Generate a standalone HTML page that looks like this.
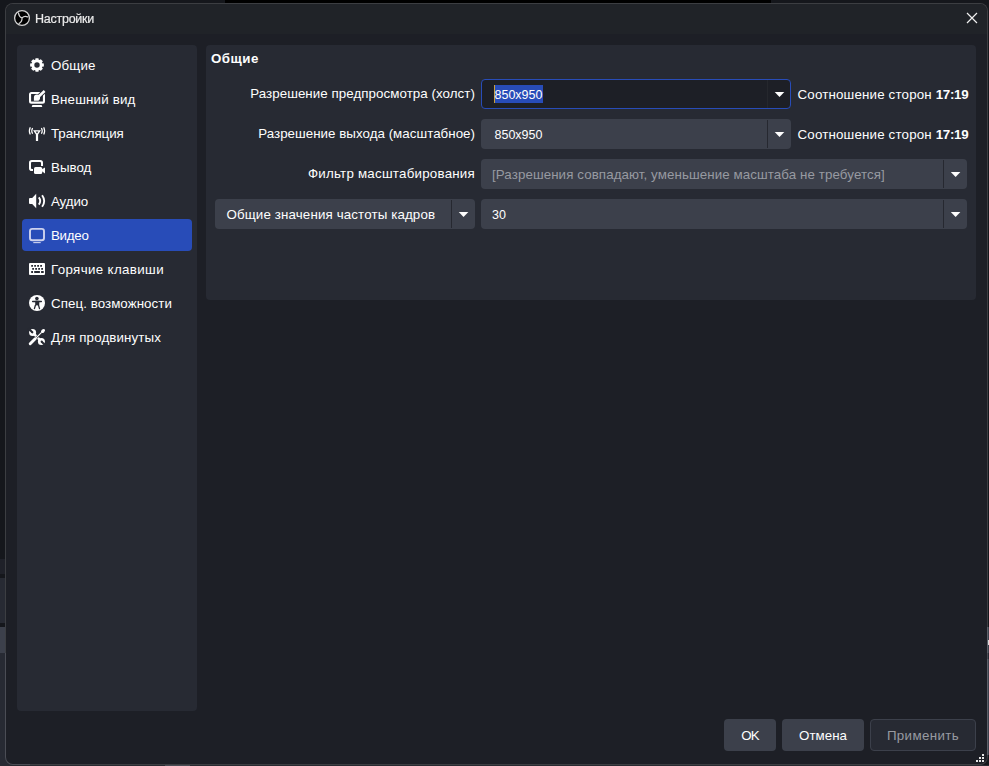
<!DOCTYPE html>
<html><head><meta charset="utf-8">
<style>
*{box-sizing:border-box;margin:0;padding:0}
html,body{width:989px;height:766px;overflow:hidden;background:#15171c}
body{position:relative;font-family:"Liberation Sans",sans-serif;font-size:13.33px;color:#fefefe}
.a{position:absolute}
.t{position:absolute;white-space:nowrap;line-height:16px}
#win{left:5px;top:3px;width:983px;height:762px;border:1px solid rgba(255,255,255,0.17);border-radius:8px;background:#1d1f26;background-clip:padding-box;overflow:hidden}
#tbar{left:0;top:0;width:981px;height:30px;background:#202328}
.panel{background:#272a33;border-radius:4px}
.combo{background:#3c404b;border-radius:4px}
.sep{position:absolute;top:1px;bottom:1px;width:1px;background:#262830}
.arr{position:absolute;width:0;height:0;border-left:4.8px solid transparent;border-right:4.8px solid transparent;border-top:5.6px solid #fefefe}
.btn{position:absolute;background:#3c404b;border-radius:4px;height:32px;text-align:center;line-height:34px}
svg{position:absolute;overflow:visible;z-index:5}
</style></head><body>
<div class="a" style="left:225px;top:0;width:546px;height:3px;background:#000"></div>
<!-- left strip of main window behind -->
<div class="a" style="left:0;top:559px;width:5px;height:15px;background:#1f2129"></div>
<div class="a" style="left:0;top:578px;width:5px;height:45px;background:#272a33"></div>
<div class="a" style="left:0;top:627px;width:5px;height:26px;background:#3c404b"></div>
<div class="a" style="left:0;top:653px;width:30px;height:113px;background:#272a33"></div>
<div class="a" style="left:0;top:765px;width:989px;height:1px;background:#292b32"></div>
<div class="a" style="left:165px;top:765px;width:25px;height:1px;background:#4a4d56"></div>
<div class="a" style="left:986px;top:627px;width:3px;height:26px;background:#3c404b"></div>
<div class="a" style="left:986px;top:653px;width:3px;height:6px;background:#272a33"></div>
<div class="a" style="left:986px;top:659px;width:3px;height:96px;background:#3c404b"></div>
<div class="a" style="left:988px;top:640px;width:1px;height:5px;background:#d8d8d8"></div>

<div id="win" class="a">
  <div id="tbar" class="a"></div>
</div>

<!-- OBS logo -->
<svg style="left:0;top:0" width="989" height="766">
  <circle cx="22" cy="18" r="7.4" fill="#000" stroke="#d2d2d2" stroke-width="1.3"/>
  <path d="M18.5 13 Q18.9 16.9 22 18 M22 18 Q24.3 15.5 27.6 16.9 M22 18 Q22.3 21.6 19.2 23.4" stroke="#d2d2d2" stroke-width="1.25" fill="none" stroke-linecap="round"/>
  <path d="M967 13 L977 23 M977 13 L967 23" stroke="#f0f0f0" stroke-width="1.2"/>
  <g fill="#fefefe" stroke="none">
   <!-- gear -->
   <g transform="translate(29,57)"><path fill-rule="evenodd" d="M6.15 2.93 L6.54 1.15 L9.46 1.15 L9.85 2.93 L10.28 3.11 L11.81 2.13 L13.87 4.19 L12.89 5.72 L13.07 6.15 L14.85 6.54 L14.85 9.46 L13.07 9.85 L12.89 10.28 L13.87 11.81 L11.81 13.87 L10.28 12.89 L9.85 13.07 L9.46 14.85 L6.54 14.85 L6.15 13.07 L5.72 12.89 L4.19 13.87 L2.13 11.81 L3.11 10.28 L2.93 9.85 L1.15 9.46 L1.15 6.54 L2.93 6.15 L3.11 5.72 L2.13 4.19 L4.19 2.13 L5.72 3.11Z M10.7 8 A2.7 2.7 0 1 0 5.3 8 A2.7 2.7 0 1 0 10.7 8Z"/></g>
   <!-- appearance: monitor with brush -->
   <g transform="translate(29,91)">
     <path fill-rule="evenodd" d="M2.5 0.9 H13.5 Q16 0.9 16 3.4 V10.3 Q16 12.8 13.5 12.8 H2.5 Q0 12.8 0 10.3 V3.4 Q0 0.9 2.5 0.9Z M2.1 3 V10.6 H13.9 V3Z"/>
     <path d="M3.4 14 H12.6 L13.3 16.1 H2.7Z"/>
     <path d="M8.6 6.6 L16.8 -1.2" stroke="#272a33" stroke-width="4.4"/>
     <path d="M9.2 6 L15.6 0" stroke="#fefefe" stroke-width="2.5"/>
     <path d="M4.9 9.8 V6.7 A3.1 3.1 0 1 1 8 9.8Z"/>
   </g>
   <!-- stream: antenna -->
   <g transform="translate(29,125)">
     <path fill-rule="evenodd" d="M4.1 5.2 H11.9 L9.1 9.6 V16 H6.9 V9.6Z M6.5 6.5 L8 8.5 L9.5 6.5Z"/>
     <g fill="none" stroke="#fefefe" stroke-width="1.2">
       <path d="M3.6 3 Q1.9 5.9 3.6 8.8"/><path d="M1.3 2.2 Q-0.6 5.9 1.3 9.6"/>
       <path d="M12.4 3 Q14.1 5.9 12.4 8.8"/><path d="M14.7 2.2 Q16.6 5.9 14.7 9.6"/>
     </g>
   </g>
   <!-- output -->
   <g transform="translate(29,159)">
     <path d="M2.8 1 H11.2 Q14 1 14 3.8 V7 H12 V4 Q12 3 11 3 H3 Q2 3 2 4 V9.2 Q2 10 3 10 H4 V12 H2.8 Q0 12 0 9.2 V3.8 Q0 1 2.8 1Z"/>
     <rect x="5" y="8" width="8.2" height="7" rx="1.6"/>
     <path d="M12.6 10.6 L16 8.6 V14.4 L12.6 12.1Z"/>
   </g>
   <!-- audio -->
   <g transform="translate(29,193)">
     <path d="M1 5 H3.2 L7.2 0.7 V15.2 L3.2 11 H1 Q0 11 0 10 V6 Q0 5 1 5Z"/>
     <g fill="none" stroke="#fefefe" stroke-width="1.9">
       <path d="M9.8 4.4 Q12.6 8 9.8 11.6"/>
       <path d="M13.1 2.2 Q17.3 8 13.1 13.8"/>
     </g>
   </g>
   <!-- video monitor (selected) -->
   <g transform="translate(29,227)" fill="none" stroke="#cdd2ee">
     <rect x="1" y="1.9" width="14" height="11.3" rx="2.3" stroke-width="1.9"/>
     <path d="M4.3 15.6 H11.7" stroke-width="1.1"/>
   </g>
   <!-- keyboard -->
   <g transform="translate(29,261)">
     <path fill-rule="evenodd" d="M1 2 H15 Q16 2 16 3 V13 Q16 14 15 14 H1 Q0 14 0 13 V3 Q0 2 1 2Z
       M2.2 4 h1.8 v1.8 h-1.8Z M5.2 4 h1.8 v1.8 h-1.8Z M8.2 4 h1.8 v1.8 h-1.8Z M11.2 4 h1.8 v1.8 h-1.8Z
       M3.2 7 h1.8 v1.8 h-1.8Z M6.2 7 h1.8 v1.8 h-1.8Z M9.2 7 h1.8 v1.8 h-1.8Z M12.2 7 h1.8 v1.8 h-1.8Z
       M2.2 10.1 h1.8 v1.8 h-1.8Z M5.2 10.1 h5.7 v1.8 h-5.7Z M12.1 10.1 h2.6 v1.8 h-2.6Z"/>
   </g>
   <!-- accessibility -->
   <g transform="translate(29,295)">
     <circle cx="8" cy="8" r="8"/>
     <g fill="#272a33" stroke="#272a33">
       <circle cx="7.9" cy="3.6" r="1.8" stroke="none"/>
       <path d="M3.6 6.5 H12.4" stroke-width="1.3" stroke-linecap="round"/>
       <path d="M6.3 6.3 H9.7 L9.6 10.3 L10.5 13.6 M6.4 10.3 L5.4 13.6" stroke-width="1.3" stroke-linecap="round" fill="none"/>
       <rect x="6.2" y="6.2" width="3.5" height="4.2" stroke="none"/>
     </g>
   </g>
   <!-- tools -->
   <g transform="translate(29,329)">
     <path d="M4.2 4.2 L11.8 11.8" stroke="#fefefe" stroke-width="2.6"/>
     <circle cx="3.6" cy="3.6" r="3.5"/>
     <circle cx="12.4" cy="12.4" r="3.5"/>
     <path d="M3.3 3.3 L-0.8 -0.8 M12.7 12.7 L16.8 16.8" stroke="#272a33" stroke-width="2"/>
     <circle cx="3.3" cy="3.3" r="1.1" fill="#272a33"/>
     <circle cx="12.7" cy="12.7" r="1.1" fill="#272a33"/>
     <path d="M1.2 14.8 L13.2 2.8" stroke="#272a33" stroke-width="2.4"/>
     <path d="M1.2 14.8 L6.2 9.8" stroke="#fefefe" stroke-width="2.9" stroke-linecap="round"/>
     <path d="M6 10 L12.6 3.4" stroke="#fefefe" stroke-width="1.1"/>
     <ellipse cx="14" cy="2" rx="2.3" ry="1.6" transform="rotate(-45 14 2)"/>
   </g>
  </g>
</svg>
<div id="title" class="t" style="letter-spacing:-0.25px;will-change:transform;-webkit-text-stroke:0.2px #e8e8e8;left:34.6px;top:10.5px;font-size:12.5px;color:#ececec">Настройки</div>

<!-- sidebar -->
<div class="a panel" style="left:17px;top:45px;width:180px;height:666px"></div>
<div class="a" style="left:22px;top:219px;width:170px;height:32px;background:#284cb8;border-radius:4px"></div>

<div id="s0" class="t" style="letter-spacing:0.15px;left:51px;top:58px">Общие</div>
<div id="s1" class="t" style="letter-spacing:0.17px;left:51px;top:92px">Внешний вид</div>
<div id="s2" class="t" style="letter-spacing:-0.09px;left:51px;top:126px">Трансляция</div>
<div id="s3" class="t" style="letter-spacing:0px;left:51px;top:160px">Вывод</div>
<div id="s4" class="t" style="letter-spacing:-0.12px;left:51px;top:194px">Аудио</div>
<div id="s5" class="t" style="letter-spacing:-0.27px;left:51px;top:228px">Видео</div>
<div id="s6" class="t" style="letter-spacing:0.36px;left:51px;top:262px">Горячие клавиши</div>
<div id="s7" class="t" style="letter-spacing:0.06px;left:51px;top:296px">Спец. возможности</div>
<div id="s8" class="t" style="letter-spacing:0.13px;left:51px;top:330px">Для продвинутых</div>

<!-- content panel -->
<div class="a panel" style="left:206px;top:45px;width:770px;height:255px"></div>
<div id="hdr" class="t" style="letter-spacing:0.5px;left:211px;top:51px;font-weight:bold">Общие</div>

<!-- row1 -->
<div id="l1" class="t" style="letter-spacing:0.06px;right:514px;top:85.5px">Разрешение предпросмотра (холст)</div>
<div class="a" style="left:481px;top:79px;width:310px;height:30px;background:#1d1f26;border:1px solid #284cb8;border-radius:4px"></div>
<div class="a" style="left:494px;top:85px;width:49px;height:18px;background:#284cb8"></div>
<div class="a" style="left:494px;top:85px;width:1px;height:18px;background:#c8a040"></div>
<div id="v1" class="t" style="letter-spacing:0px;font-size:12.5px;left:494.5px;top:87px">850x950</div>
<div class="a" style="left:767px;top:80px;width:1px;height:28px;background:#25272d"></div>
<div id="a1" class="t" style="letter-spacing:0.17px;left:797.5px;top:87px">Соотношение сторон <b style="letter-spacing:-0.3px">17:19</b></div>

<!-- row2 -->
<div id="l2" class="t" style="letter-spacing:0.03px;right:514px;top:126px">Разрешение выхода (масштабное)</div>
<div class="a combo" style="left:481px;top:119px;width:310px;height:30px"><div class="sep" style="left:286px"></div></div>
<div id="v2" class="t" style="letter-spacing:0px;font-size:12.5px;left:494.5px;top:127px">850x950</div>
<div id="a2" class="t" style="letter-spacing:0.17px;left:797.5px;top:127px">Соотношение сторон <b style="letter-spacing:-0.3px">17:19</b></div>

<!-- row3 -->
<div id="l3" class="t" style="letter-spacing:0.23px;right:514px;top:166px">Фильтр масштабирования</div>
<div class="a combo" style="left:481px;top:159px;width:486px;height:30px"><div class="sep" style="left:462px"></div></div>
<div id="ph3" class="t" style="letter-spacing:0.09px;left:492px;top:167px;color:#979aa1">[Разрешения совпадают, уменьшение масштаба не требуется]</div>

<!-- row4 -->
<div class="a combo" style="left:215px;top:199px;width:260px;height:30px"><div class="sep" style="left:236px"></div></div>
<div id="fr4" class="t" style="letter-spacing:0.13px;left:226.5px;top:207px">Общие значения частоты кадров</div>
<div class="a combo" style="left:481px;top:199px;width:486px;height:30px"><div class="sep" style="left:462px"></div></div>
<div id="v30" class="t" style="letter-spacing:0px;font-size:12.5px;left:492px;top:207px">30</div>

<svg style="left:0;top:0" width="989" height="766"><g fill="#fefefe"><path d="M774.7 92 H784.3000000000001 L779.5 97.1Z"/><path d="M774.7 132 H784.3000000000001 L779.5 137.1Z"/><path d="M950.8 172 H960.4 L955.5999999999999 177.1Z"/><path d="M458.75 212 H468.35 L463.55 217.1Z"/><path d="M950.8 212 H960.4 L955.5999999999999 217.1Z"/></g></svg>
<!-- buttons -->
<div class="btn" style="left:724px;top:719px;width:52px"><span id="ok" style="letter-spacing:-1px">OK</span></div>
<div class="btn" style="left:782px;top:719px;width:82px"><span id="cancel" style="letter-spacing:0px">Отмена</span></div>
<div class="btn" style="left:870px;top:719px;width:106px;background:#272a33;border:1px solid #3c404b;line-height:32px;color:#979aa1"><span id="apply" style="letter-spacing:0.37px">Применить</span></div>

<!-- grip -->
<div class="a" style="left:982px;top:754px;width:2px;height:2px;background:#e6e6e6"></div>
<div class="a" style="left:979px;top:757px;width:2px;height:2px;background:#e6e6e6"></div>
<div class="a" style="left:982px;top:757px;width:2px;height:2px;background:#e6e6e6"></div>
<div class="a" style="left:976px;top:760px;width:2px;height:2px;background:#e6e6e6"></div>
<div class="a" style="left:979px;top:760px;width:2px;height:2px;background:#e6e6e6"></div>
<div class="a" style="left:982px;top:760px;width:2px;height:2px;background:#e6e6e6"></div>

</body></html>
